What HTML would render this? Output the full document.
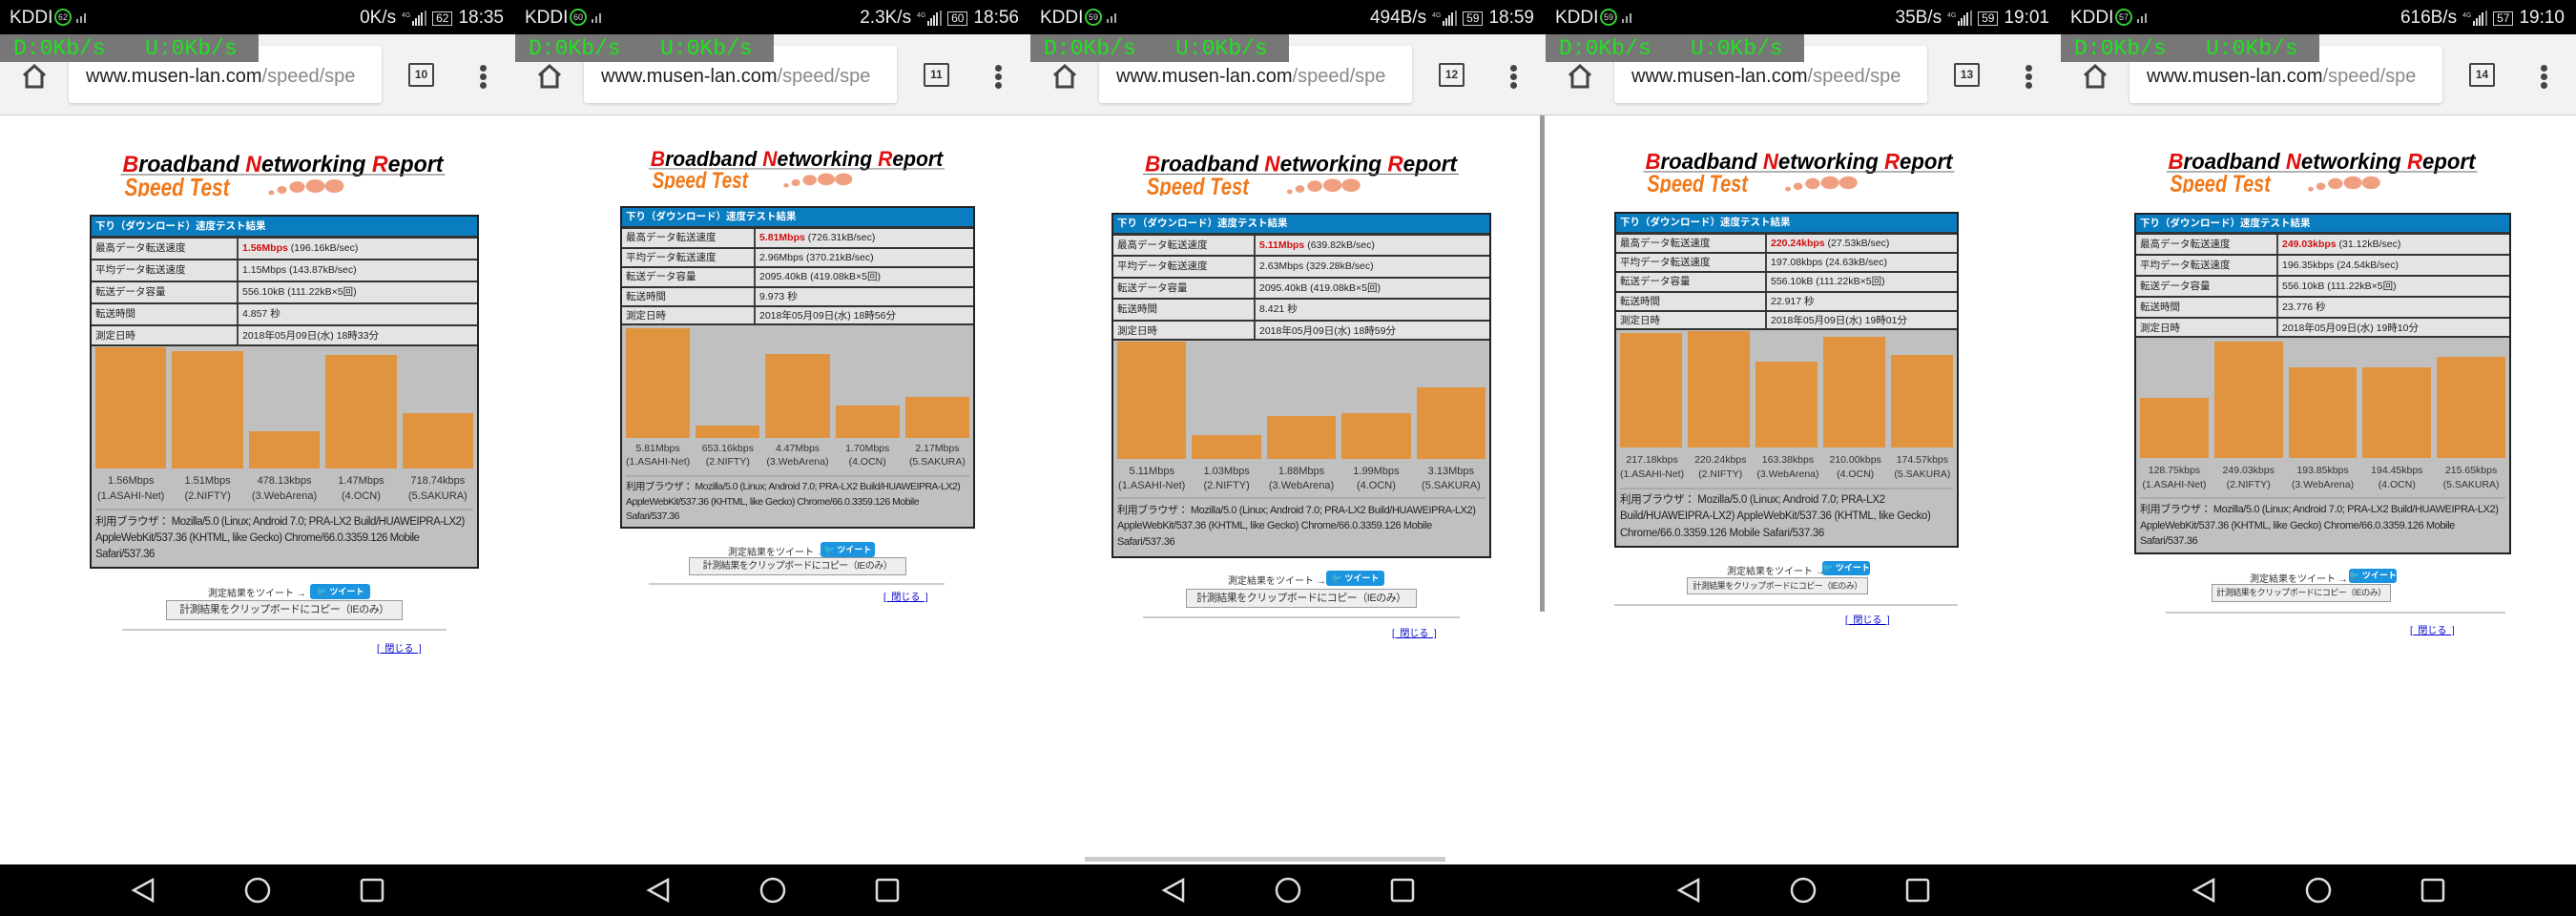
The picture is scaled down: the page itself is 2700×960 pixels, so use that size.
<!DOCTYPE html>
<html><head><meta charset="utf-8"><style>
*{margin:0;padding:0;box-sizing:border-box}
body{width:2700px;height:960px;position:relative;overflow:hidden;background:#fff;font-family:"Liberation Sans","Noto Sans CJK JP",sans-serif}
.p{position:absolute;top:0;width:540px;height:960px;overflow:hidden;background:#fff}
.a{position:absolute}
.sb{left:0;top:0;width:540px;height:36px;background:#000;color:#eee;font-size:19px}
.sb .k{left:10px;top:8px}
.sb .c{left:57px;top:9px;width:18px;height:18px;border:2px solid #3c3;border-radius:50%;font-size:9px;line-height:14px;text-align:center;color:#ddd}
.sb .r{right:12px;top:8px;white-space:nowrap;font-size:19px;display:flex;align-items:center}
.bat{display:inline-block;border:1px solid #ccc;font-size:12px;line-height:13px;padding:0 3px;margin:0 6px 0 4px}
.ub{left:0;top:36px;width:540px;height:85px;background:#f2f2f2;border-bottom:1px solid #cfcfcf}
.url{left:72px;top:48px;width:328px;height:60px;background:#fff;border-radius:3px;box-shadow:0 1px 3px rgba(0,0,0,.18);font-size:20px;line-height:64px;padding-left:18px;color:#222;white-space:nowrap;overflow:hidden}
.url span{color:#888}
.ov{left:0;top:36px;width:271px;height:29px;background:#777;color:#22e022;font:23px "Liberation Mono",monospace;line-height:30px;padding-left:14px;white-space:pre}
.tab{left:428px;top:66px;width:27px;height:25px;border:2px solid #444;border-radius:2px;font-size:12px;font-weight:bold;text-align:center;line-height:21px;color:#333}
.dot{left:503px;width:7px;height:7px;border-radius:50%;background:#444}
.nav{left:0;top:906px;width:540px;height:54px;background:#000}
.t{position:absolute;border:2px solid #222;background:#c0c0c0;font-size:10.5px;color:#222;overflow:hidden}
.hd{background:#0a7cc0;color:#fff;font-weight:bold;padding-left:4px;white-space:nowrap;border-bottom:1px solid #333}
.rw{display:flex;border-top:2px solid #333;background:#e4e4e4;white-space:nowrap}
.rw div{padding-left:4px}
.rw div:first-child{border-right:2px solid #444}
.rd{color:#d01010;font-weight:bold}
.ch{display:flex;align-items:flex-end;gap:6px;padding:0 4px}
.ch i{flex:1;background:#e0943f;display:block}
.lb{display:flex;gap:6px;padding:0 4px;font-size:11px;color:#333}
.lb div{flex:1;text-align:center;white-space:nowrap}
.br{border-top:2px solid #aaa;margin:0 4px;font-size:11.5px;color:#222;letter-spacing:-0.3px}
.tw{font-size:10px;color:#333;white-space:nowrap}
.twb{background:#1b95e0;color:#fff;border-radius:3px;font-size:9px;text-align:center;font-weight:bold;white-space:nowrap;overflow:hidden}
.cp{border:1px solid #999;background:#eee;font-size:11px;text-align:center;white-space:nowrap;color:#333;overflow:hidden;letter-spacing:-0.5px}
.hr{height:2px;background:#ccc}
.cl{font-size:10px;color:#00c;text-decoration:underline;white-space:pre}
</style></head><body>

<!-- PANEL 1 -->
<div class="p" style="left:0">
 <div class="a sb"><span class="a k">KDDI</span><span class="a c">62</span><svg class="a" style="left:80px;top:14px" width="12" height="10"><rect x="0" y="6" width="2" height="4" fill="#aaa"/><rect x="4" y="3" width="2" height="7" fill="#aaa"/><rect x="8" y="0" width="2" height="10" fill="#aaa"/></svg><span class="a r">0K/s<svg width="28" height="18" style="margin-left:6px"><text x="0" y="8" font-size="7" fill="#ccc" font-family="Liberation Sans">4G</text><rect x="11" y="12" width="2" height="5" fill="#ddd"/><rect x="14" y="9" width="2" height="8" fill="#ddd"/><rect x="17" y="6" width="2" height="11" fill="#ddd"/><rect x="20" y="3" width="2" height="14" fill="#ddd"/><rect x="24" y="1" width="2" height="16" fill="#888"/></svg><span class="bat">62</span>18:35</span></div>
 <div class="a ub"></div>
 <div class="a url">www.musen-lan.com<span>/speed/spe</span></div>
 <div class="a ov">D:0Kb/s   U:0Kb/s</div>
 <svg class="a" style="left:22px;top:66px" width="28" height="28" viewBox="0 0 28 28"><path d="M3 13 L14 3 L25 13 M6 11 V25 H22 V11" fill="none" stroke="#444" stroke-width="3"/></svg>
 <div class="a tab">10</div>
 <div class="a dot" style="top:68px"></div><div class="a dot" style="top:77px"></div><div class="a dot" style="top:86px"></div>
 <svg class="a" style="left:126px;top:158px" width="341" height="48" viewBox="0 0 340 48"><text x="2" y="22" font-family="Liberation Sans" font-weight="bold" font-style="italic" font-size="24" textLength="336" lengthAdjust="spacingAndGlyphs"><tspan fill="#e01010">B</tspan>roadband <tspan fill="#e01010">N</tspan>etworking <tspan fill="#e01010">R</tspan>eport</text><line x1="0" y1="25" x2="340" y2="25" stroke="#666" stroke-width="1"/><text x="4" y="47" font-family="Liberation Sans" font-weight="bold" font-style="italic" font-size="26" fill="#f07818" textLength="110" lengthAdjust="spacingAndGlyphs">Speed Test</text><g fill="#f0a080"><ellipse cx="158" cy="44" rx="3" ry="2.5"/><ellipse cx="169" cy="41" rx="5" ry="4"/><ellipse cx="185" cy="38" rx="8" ry="6"/><ellipse cx="204" cy="37" rx="10" ry="7"/><ellipse cx="224" cy="37" rx="10" ry="7"/></g></svg>
 <div class="t" style="left:94px;top:225px;width:408px;height:371px">
  <div class="hd" style="height:21px;line-height:20px">下り（ダウンロード）速度テスト結果</div>
  <div class="rw" style="height:23px;line-height:21px"><div style="width:154px">最高データ転送速度</div><div><span class="rd">1.56Mbps</span> (196.16kB/sec)</div></div>
  <div class="rw" style="height:23px;line-height:21px"><div style="width:154px">平均データ転送速度</div><div>1.15Mbps (143.87kB/sec)</div></div>
  <div class="rw" style="height:23px;line-height:21px"><div style="width:154px">転送データ容量</div><div>556.10kB (111.22kB×5回)</div></div>
  <div class="rw" style="height:23px;line-height:21px"><div style="width:154px">転送時間</div><div>4.857 秒</div></div>
  <div class="rw" style="height:23px;line-height:21px;border-bottom:2px solid #333"><div style="width:154px">測定日時</div><div>2018年05月09日(水) 18時33分</div></div>
  <div class="ch" style="height:128px"><i style="height:127px"></i><i style="height:123px"></i><i style="height:39px"></i><i style="height:119px"></i><i style="height:58px"></i></div>
  <div class="lb" style="height:42px;line-height:16px;padding-top:5px"><div>1.56Mbps<br>(1.ASAHI-Net)</div><div>1.51Mbps<br>(2.NIFTY)</div><div>478.13kbps<br>(3.WebArena)</div><div>1.47Mbps<br>(4.OCN)</div><div>718.74kbps<br>(5.SAKURA)</div></div>
  <div class="br" style="line-height:17px;padding-top:4px;font-size:11.5px;letter-spacing:-0.5px">利用ブラウザ： Mozilla/5.0 (Linux; Android 7.0; PRA-LX2 Build/HUAWEIPRA-LX2) AppleWebKit/537.36 (KHTML, like Gecko) Chrome/66.0.3359.126 Mobile Safari/537.36</div>
 </div>
 <div class="a tw" style="left:218px;top:613px">測定結果をツイート →</div>
 <div class="a twb" style="left:325px;top:612px;width:63px;height:16px;line-height:16px">🐦 ツイート</div>
 <div class="a cp" style="left:174px;top:629px;width:248px;height:21px;line-height:19px">計測結果をクリップボードにコピー（IEのみ）</div>
 <div class="a hr" style="left:128px;top:659px;width:340px"></div>
 <div class="a cl" style="left:395px;top:671px">[  閉じる  ]</div>
 <div class="a nav"></div>
 <svg class="a" style="left:0;top:906px" width="540" height="54"><path d="M160 16 L140 27 L160 38 Z" fill="none" stroke="#ddd" stroke-width="2.5"/><circle cx="270" cy="27" r="12" fill="none" stroke="#ddd" stroke-width="2.5"/><rect x="379" y="16" width="22" height="22" rx="2" fill="none" stroke="#ddd" stroke-width="2.5"/></svg>
</div>

<!-- PANEL 2 -->
<div class="p" style="left:540px">
 <div class="a sb"><span class="a k">KDDI</span><span class="a c">60</span><svg class="a" style="left:80px;top:14px" width="12" height="10"><rect x="0" y="6" width="2" height="4" fill="#aaa"/><rect x="4" y="3" width="2" height="7" fill="#aaa"/><rect x="8" y="0" width="2" height="10" fill="#aaa"/></svg><span class="a r">2.3K/s<svg width="28" height="18" style="margin-left:6px"><text x="0" y="8" font-size="7" fill="#ccc" font-family="Liberation Sans">4G</text><rect x="11" y="12" width="2" height="5" fill="#ddd"/><rect x="14" y="9" width="2" height="8" fill="#ddd"/><rect x="17" y="6" width="2" height="11" fill="#ddd"/><rect x="20" y="3" width="2" height="14" fill="#ddd"/><rect x="24" y="1" width="2" height="16" fill="#888"/></svg><span class="bat">60</span>18:56</span></div>
 <div class="a ub"></div>
 <div class="a url">www.musen-lan.com<span>/speed/spe</span></div>
 <div class="a ov">D:0Kb/s   U:0Kb/s</div>
 <svg class="a" style="left:22px;top:66px" width="28" height="28" viewBox="0 0 28 28"><path d="M3 13 L14 3 L25 13 M6 11 V25 H22 V11" fill="none" stroke="#444" stroke-width="3"/></svg>
 <div class="a tab">11</div>
 <div class="a dot" style="top:68px"></div><div class="a dot" style="top:77px"></div><div class="a dot" style="top:86px"></div>
 <svg class="a" style="left:140px;top:154px" width="310" height="44" viewBox="0 0 340 48"><text x="2" y="22" font-family="Liberation Sans" font-weight="bold" font-style="italic" font-size="24" textLength="336" lengthAdjust="spacingAndGlyphs"><tspan fill="#e01010">B</tspan>roadband <tspan fill="#e01010">N</tspan>etworking <tspan fill="#e01010">R</tspan>eport</text><line x1="0" y1="25" x2="340" y2="25" stroke="#666" stroke-width="1"/><text x="4" y="47" font-family="Liberation Sans" font-weight="bold" font-style="italic" font-size="26" fill="#f07818" textLength="110" lengthAdjust="spacingAndGlyphs">Speed Test</text><g fill="#f0a080"><ellipse cx="158" cy="44" rx="3" ry="2.5"/><ellipse cx="169" cy="41" rx="5" ry="4"/><ellipse cx="185" cy="38" rx="8" ry="6"/><ellipse cx="204" cy="37" rx="10" ry="7"/><ellipse cx="224" cy="37" rx="10" ry="7"/></g></svg>
 <div class="t" style="left:110px;top:216px;width:372px;height:338px">
  <div class="hd" style="height:20px;line-height:19px">下り（ダウンロード）速度テスト結果</div>
  <div class="rw" style="height:20.6px;line-height:18px"><div style="width:140px">最高データ転送速度</div><div><span class="rd">5.81Mbps</span> (726.31kB/sec)</div></div>
  <div class="rw" style="height:20.6px;line-height:18px"><div style="width:140px">平均データ転送速度</div><div>2.96Mbps (370.21kB/sec)</div></div>
  <div class="rw" style="height:20.6px;line-height:18px"><div style="width:140px">転送データ容量</div><div>2095.40kB (419.08kB×5回)</div></div>
  <div class="rw" style="height:20.6px;line-height:18px"><div style="width:140px">転送時間</div><div>9.973 秒</div></div>
  <div class="rw" style="height:21px;line-height:18px;border-bottom:2px solid #333"><div style="width:140px">測定日時</div><div>2018年05月09日(水) 18時56分</div></div>
  <div class="ch" style="height:118px"><i style="height:115px"></i><i style="height:13px"></i><i style="height:88px"></i><i style="height:34px"></i><i style="height:43px"></i></div>
  <div class="lb" style="height:39px;line-height:14px;padding-top:4px;font-size:10.5px"><div>5.81Mbps<br>(1.ASAHI-Net)</div><div>653.16kbps<br>(2.NIFTY)</div><div>4.47Mbps<br>(3.WebArena)</div><div>1.70Mbps<br>(4.OCN)</div><div>2.17Mbps<br>(5.SAKURA)</div></div>
  <div class="br" style="line-height:15.5px;padding-top:3px;font-size:10.5px;letter-spacing:-0.5px">利用ブラウザ： Mozilla/5.0 (Linux; Android 7.0; PRA-LX2 Build/HUAWEIPRA-LX2) AppleWebKit/537.36 (KHTML, like Gecko) Chrome/66.0.3359.126 Mobile Safari/537.36</div>
 </div>
 <div class="a tw" style="left:223px;top:570px">測定結果をツイート →</div>
 <div class="a twb" style="left:320px;top:568px;width:57px;height:16px;line-height:16px">🐦 ツイート</div>
 <div class="a cp" style="left:182px;top:584px;width:228px;height:19px;line-height:17px;font-size:10px">計測結果をクリップボードにコピー（IEのみ）</div>
 <div class="a hr" style="left:140px;top:611px;width:310px"></div>
 <div class="a cl" style="left:386px;top:617px">[  閉じる  ]</div>
 <div class="a nav"></div>
 <svg class="a" style="left:0;top:906px" width="540" height="54"><path d="M160 16 L140 27 L160 38 Z" fill="none" stroke="#ddd" stroke-width="2.5"/><circle cx="270" cy="27" r="12" fill="none" stroke="#ddd" stroke-width="2.5"/><rect x="379" y="16" width="22" height="22" rx="2" fill="none" stroke="#ddd" stroke-width="2.5"/></svg>
</div>

<!-- PANEL 3 -->
<div class="p" style="left:1080px">
 <div class="a sb"><span class="a k">KDDI</span><span class="a c">59</span><svg class="a" style="left:80px;top:14px" width="12" height="10"><rect x="0" y="6" width="2" height="4" fill="#aaa"/><rect x="4" y="3" width="2" height="7" fill="#aaa"/><rect x="8" y="0" width="2" height="10" fill="#aaa"/></svg><span class="a r">494B/s<svg width="28" height="18" style="margin-left:6px"><text x="0" y="8" font-size="7" fill="#ccc" font-family="Liberation Sans">4G</text><rect x="11" y="12" width="2" height="5" fill="#ddd"/><rect x="14" y="9" width="2" height="8" fill="#ddd"/><rect x="17" y="6" width="2" height="11" fill="#ddd"/><rect x="20" y="3" width="2" height="14" fill="#ddd"/><rect x="24" y="1" width="2" height="16" fill="#888"/></svg><span class="bat">59</span>18:59</span></div>
 <div class="a ub"></div>
 <div class="a url">www.musen-lan.com<span>/speed/spe</span></div>
 <div class="a ov">D:0Kb/s   U:0Kb/s</div>
 <svg class="a" style="left:22px;top:66px" width="28" height="28" viewBox="0 0 28 28"><path d="M3 13 L14 3 L25 13 M6 11 V25 H22 V11" fill="none" stroke="#444" stroke-width="3"/></svg>
 <div class="a tab">12</div>
 <div class="a dot" style="top:68px"></div><div class="a dot" style="top:77px"></div><div class="a dot" style="top:86px"></div>
 <svg class="a" style="left:118px;top:158px" width="331" height="47" viewBox="0 0 340 48"><text x="2" y="22" font-family="Liberation Sans" font-weight="bold" font-style="italic" font-size="24" textLength="336" lengthAdjust="spacingAndGlyphs"><tspan fill="#e01010">B</tspan>roadband <tspan fill="#e01010">N</tspan>etworking <tspan fill="#e01010">R</tspan>eport</text><line x1="0" y1="25" x2="340" y2="25" stroke="#666" stroke-width="1"/><text x="4" y="47" font-family="Liberation Sans" font-weight="bold" font-style="italic" font-size="26" fill="#f07818" textLength="110" lengthAdjust="spacingAndGlyphs">Speed Test</text><g fill="#f0a080"><ellipse cx="158" cy="44" rx="3" ry="2.5"/><ellipse cx="169" cy="41" rx="5" ry="4"/><ellipse cx="185" cy="38" rx="8" ry="6"/><ellipse cx="204" cy="37" rx="10" ry="7"/><ellipse cx="224" cy="37" rx="10" ry="7"/></g></svg>
 <div class="t" style="left:85px;top:223px;width:398px;height:362px">
  <div class="hd" style="height:20px;line-height:19px">下り（ダウンロード）速度テスト結果</div>
  <div class="rw" style="height:22.4px;line-height:20px"><div style="width:149px">最高データ転送速度</div><div><span class="rd">5.11Mbps</span> (639.82kB/sec)</div></div>
  <div class="rw" style="height:22.4px;line-height:20px"><div style="width:149px">平均データ転送速度</div><div>2.63Mbps (329.28kB/sec)</div></div>
  <div class="rw" style="height:22.4px;line-height:20px"><div style="width:149px">転送データ容量</div><div>2095.40kB (419.08kB×5回)</div></div>
  <div class="rw" style="height:22.4px;line-height:20px"><div style="width:149px">転送時間</div><div>8.421 秒</div></div>
  <div class="rw" style="height:22.4px;line-height:20px;border-bottom:2px solid #333"><div style="width:149px">測定日時</div><div>2018年05月09日(水) 18時59分</div></div>
  <div class="ch" style="height:124px"><i style="height:123px"></i><i style="height:25px"></i><i style="height:45px"></i><i style="height:48px"></i><i style="height:75px"></i></div>
  <div class="lb" style="height:40px;line-height:15px;padding-top:6px"><div>5.11Mbps<br>(1.ASAHI-Net)</div><div>1.03Mbps<br>(2.NIFTY)</div><div>1.88Mbps<br>(3.WebArena)</div><div>1.99Mbps<br>(4.OCN)</div><div>3.13Mbps<br>(5.SAKURA)</div></div>
  <div class="br" style="line-height:16.5px;padding-top:4px;font-size:11px;letter-spacing:-0.4px">利用ブラウザ： Mozilla/5.0 (Linux; Android 7.0; PRA-LX2 Build/HUAWEIPRA-LX2) AppleWebKit/537.36 (KHTML, like Gecko) Chrome/66.0.3359.126 Mobile Safari/537.36</div>
 </div>
 <div class="a tw" style="left:207px;top:600px">測定結果をツイート →</div>
 <div class="a twb" style="left:310px;top:598px;width:61px;height:16px;line-height:16px">🐦 ツイート</div>
 <div class="a cp" style="left:163px;top:617px;width:242px;height:20px;line-height:18px">計測結果をクリップボードにコピー（IEのみ）</div>
 <div class="a hr" style="left:118px;top:646px;width:332px"></div>
 <div class="a cl" style="left:379px;top:655px">[  閉じる  ]</div>
 <div class="a" style="left:534px;top:121px;width:5px;height:520px;background:#9a9a9a"></div>
 <div class="a nav"></div>
 <svg class="a" style="left:0;top:906px" width="540" height="54"><path d="M160 16 L140 27 L160 38 Z" fill="none" stroke="#ddd" stroke-width="2.5"/><circle cx="270" cy="27" r="12" fill="none" stroke="#ddd" stroke-width="2.5"/><rect x="379" y="16" width="22" height="22" rx="2" fill="none" stroke="#ddd" stroke-width="2.5"/></svg>
 <div class="a" style="left:57px;top:898px;width:378px;height:5px;background:#ccc"></div>
</div>

<!-- PANEL 4 -->
<div class="p" style="left:1620px">
 <div class="a sb"><span class="a k">KDDI</span><span class="a c">59</span><svg class="a" style="left:80px;top:14px" width="12" height="10"><rect x="0" y="6" width="2" height="4" fill="#aaa"/><rect x="4" y="3" width="2" height="7" fill="#aaa"/><rect x="8" y="0" width="2" height="10" fill="#aaa"/></svg><span class="a r">35B/s<svg width="28" height="18" style="margin-left:6px"><text x="0" y="8" font-size="7" fill="#ccc" font-family="Liberation Sans">4G</text><rect x="11" y="12" width="2" height="5" fill="#ddd"/><rect x="14" y="9" width="2" height="8" fill="#ddd"/><rect x="17" y="6" width="2" height="11" fill="#ddd"/><rect x="20" y="3" width="2" height="14" fill="#ddd"/><rect x="24" y="1" width="2" height="16" fill="#888"/></svg><span class="bat">59</span>19:01</span></div>
 <div class="a ub"></div>
 <div class="a url">www.musen-lan.com<span>/speed/spe</span></div>
 <div class="a ov">D:0Kb/s   U:0Kb/s</div>
 <svg class="a" style="left:22px;top:66px" width="28" height="28" viewBox="0 0 28 28"><path d="M3 13 L14 3 L25 13 M6 11 V25 H22 V11" fill="none" stroke="#444" stroke-width="3"/></svg>
 <div class="a tab">13</div>
 <div class="a dot" style="top:68px"></div><div class="a dot" style="top:77px"></div><div class="a dot" style="top:86px"></div>
 <svg class="a" style="left:102px;top:156px" width="327" height="46" viewBox="0 0 340 48"><text x="2" y="22" font-family="Liberation Sans" font-weight="bold" font-style="italic" font-size="24" textLength="336" lengthAdjust="spacingAndGlyphs"><tspan fill="#e01010">B</tspan>roadband <tspan fill="#e01010">N</tspan>etworking <tspan fill="#e01010">R</tspan>eport</text><line x1="0" y1="25" x2="340" y2="25" stroke="#666" stroke-width="1"/><text x="4" y="47" font-family="Liberation Sans" font-weight="bold" font-style="italic" font-size="26" fill="#f07818" textLength="110" lengthAdjust="spacingAndGlyphs">Speed Test</text><g fill="#f0a080"><ellipse cx="158" cy="44" rx="3" ry="2.5"/><ellipse cx="169" cy="41" rx="5" ry="4"/><ellipse cx="185" cy="38" rx="8" ry="6"/><ellipse cx="204" cy="37" rx="10" ry="7"/><ellipse cx="224" cy="37" rx="10" ry="7"/></g></svg>
 <div class="t" style="left:72px;top:222px;width:361px;height:352px">
  <div class="hd" style="height:20px;line-height:19px">下り（ダウンロード）速度テスト結果</div>
  <div class="rw" style="height:20.2px;line-height:18px"><div style="width:158px">最高データ転送速度</div><div><span class="rd">220.24kbps</span> (27.53kB/sec)</div></div>
  <div class="rw" style="height:20.2px;line-height:18px"><div style="width:158px">平均データ転送速度</div><div>197.08kbps (24.63kB/sec)</div></div>
  <div class="rw" style="height:20.2px;line-height:18px"><div style="width:158px">転送データ容量</div><div>556.10kB (111.22kB×5回)</div></div>
  <div class="rw" style="height:20.2px;line-height:18px"><div style="width:158px">転送時間</div><div>22.917 秒</div></div>
  <div class="rw" style="height:21px;line-height:18px;border-bottom:2px solid #333"><div style="width:158px">測定日時</div><div>2018年05月09日(水) 19時01分</div></div>
  <div class="ch" style="height:123px"><i style="height:120px"></i><i style="height:122px"></i><i style="height:90px"></i><i style="height:116px"></i><i style="height:97px"></i></div>
  <div class="lb" style="height:42px;line-height:15px;padding-top:6px;font-size:10.5px"><div>217.18kbps<br>(1.ASAHI-Net)</div><div>220.24kbps<br>(2.NIFTY)</div><div>163.38kbps<br>(3.WebArena)</div><div>210.00kbps<br>(4.OCN)</div><div>174.57kbps<br>(5.SAKURA)</div></div>
  <div class="br" style="line-height:17.5px;padding-top:3px;font-size:11.5px;letter-spacing:-0.3px">利用ブラウザ： Mozilla/5.0 (Linux; Android 7.0; PRA-LX2 Build/HUAWEIPRA-LX2) AppleWebKit/537.36 (KHTML, like Gecko) Chrome/66.0.3359.126 Mobile Safari/537.36</div>
 </div>
 <div class="a tw" style="left:190px;top:590px">測定結果をツイート →</div>
 <div class="a twb" style="left:290px;top:588px;width:50px;height:15px;line-height:15px">🐦 ツイート</div>
 <div class="a cp" style="left:148px;top:605px;width:190px;height:18px;line-height:16px;font-size:9px">計測結果をクリップボードにコピー（IEのみ）</div>
 <div class="a hr" style="left:72px;top:633px;width:360px"></div>
 <div class="a cl" style="left:314px;top:641px">[  閉じる  ]</div>
 <div class="a nav"></div>
 <svg class="a" style="left:0;top:906px" width="540" height="54"><path d="M160 16 L140 27 L160 38 Z" fill="none" stroke="#ddd" stroke-width="2.5"/><circle cx="270" cy="27" r="12" fill="none" stroke="#ddd" stroke-width="2.5"/><rect x="379" y="16" width="22" height="22" rx="2" fill="none" stroke="#ddd" stroke-width="2.5"/></svg>
</div>

<!-- PANEL 5 -->
<div class="p" style="left:2160px">
 <div class="a sb"><span class="a k">KDDI</span><span class="a c">57</span><svg class="a" style="left:80px;top:14px" width="12" height="10"><rect x="0" y="6" width="2" height="4" fill="#aaa"/><rect x="4" y="3" width="2" height="7" fill="#aaa"/><rect x="8" y="0" width="2" height="10" fill="#aaa"/></svg><span class="a r">616B/s<svg width="28" height="18" style="margin-left:6px"><text x="0" y="8" font-size="7" fill="#ccc" font-family="Liberation Sans">4G</text><rect x="11" y="12" width="2" height="5" fill="#ddd"/><rect x="14" y="9" width="2" height="8" fill="#ddd"/><rect x="17" y="6" width="2" height="11" fill="#ddd"/><rect x="20" y="3" width="2" height="14" fill="#ddd"/><rect x="24" y="1" width="2" height="16" fill="#888"/></svg><span class="bat">57</span>19:10</span></div>
 <div class="a ub"></div>
 <div class="a url">www.musen-lan.com<span>/speed/spe</span></div>
 <div class="a ov">D:0Kb/s   U:0Kb/s</div>
 <svg class="a" style="left:22px;top:66px" width="28" height="28" viewBox="0 0 28 28"><path d="M3 13 L14 3 L25 13 M6 11 V25 H22 V11" fill="none" stroke="#444" stroke-width="3"/></svg>
 <div class="a tab">14</div>
 <div class="a dot" style="top:68px"></div><div class="a dot" style="top:77px"></div><div class="a dot" style="top:86px"></div>
 <svg class="a" style="left:110px;top:156px" width="327" height="46" viewBox="0 0 340 48"><text x="2" y="22" font-family="Liberation Sans" font-weight="bold" font-style="italic" font-size="24" textLength="336" lengthAdjust="spacingAndGlyphs"><tspan fill="#e01010">B</tspan>roadband <tspan fill="#e01010">N</tspan>etworking <tspan fill="#e01010">R</tspan>eport</text><line x1="0" y1="25" x2="340" y2="25" stroke="#666" stroke-width="1"/><text x="4" y="47" font-family="Liberation Sans" font-weight="bold" font-style="italic" font-size="26" fill="#f07818" textLength="110" lengthAdjust="spacingAndGlyphs">Speed Test</text><g fill="#f0a080"><ellipse cx="158" cy="44" rx="3" ry="2.5"/><ellipse cx="169" cy="41" rx="5" ry="4"/><ellipse cx="185" cy="38" rx="8" ry="6"/><ellipse cx="204" cy="37" rx="10" ry="7"/><ellipse cx="224" cy="37" rx="10" ry="7"/></g></svg>
 <div class="t" style="left:77px;top:223px;width:395px;height:358px">
  <div class="hd" style="height:19px;line-height:18px">下り（ダウンロード）速度テスト結果</div>
  <div class="rw" style="height:22px;line-height:20px"><div style="width:149px">最高データ転送速度</div><div><span class="rd">249.03kbps</span> (31.12kB/sec)</div></div>
  <div class="rw" style="height:22px;line-height:20px"><div style="width:149px">平均データ転送速度</div><div>196.35kbps (24.54kB/sec)</div></div>
  <div class="rw" style="height:22px;line-height:20px"><div style="width:149px">転送データ容量</div><div>556.10kB (111.22kB×5回)</div></div>
  <div class="rw" style="height:22px;line-height:20px"><div style="width:149px">転送時間</div><div>23.776 秒</div></div>
  <div class="rw" style="height:22px;line-height:20px;border-bottom:2px solid #333"><div style="width:149px">測定日時</div><div>2018年05月09日(水) 19時10分</div></div>
  <div class="ch" style="height:126px"><i style="height:63px"></i><i style="height:122px"></i><i style="height:95px"></i><i style="height:95px"></i><i style="height:106px"></i></div>
  <div class="lb" style="height:41px;line-height:15px;padding-top:6px;font-size:10.5px"><div>128.75kbps<br>(1.ASAHI-Net)</div><div>249.03kbps<br>(2.NIFTY)</div><div>193.85kbps<br>(3.WebArena)</div><div>194.45kbps<br>(4.OCN)</div><div>215.65kbps<br>(5.SAKURA)</div></div>
  <div class="br" style="line-height:16.5px;padding-top:3px;font-size:11px;letter-spacing:-0.4px">利用ブラウザ： Mozilla/5.0 (Linux; Android 7.0; PRA-LX2 Build/HUAWEIPRA-LX2) AppleWebKit/537.36 (KHTML, like Gecko) Chrome/66.0.3359.126 Mobile Safari/537.36</div>
 </div>
 <div class="a tw" style="left:198px;top:598px">測定結果をツイート →</div>
 <div class="a twb" style="left:302px;top:596px;width:50px;height:15px;line-height:15px">🐦 ツイート</div>
 <div class="a cp" style="left:158px;top:612px;width:188px;height:19px;line-height:17px;font-size:9px">計測結果をクリップボードにコピー（IEのみ）</div>
 <div class="a hr" style="left:110px;top:641px;width:356px"></div>
 <div class="a cl" style="left:366px;top:652px">[  閉じる  ]</div>
 <div class="a nav"></div>
 <svg class="a" style="left:0;top:906px" width="540" height="54"><path d="M160 16 L140 27 L160 38 Z" fill="none" stroke="#ddd" stroke-width="2.5"/><circle cx="270" cy="27" r="12" fill="none" stroke="#ddd" stroke-width="2.5"/><rect x="379" y="16" width="22" height="22" rx="2" fill="none" stroke="#ddd" stroke-width="2.5"/></svg>
</div>

</body></html>
